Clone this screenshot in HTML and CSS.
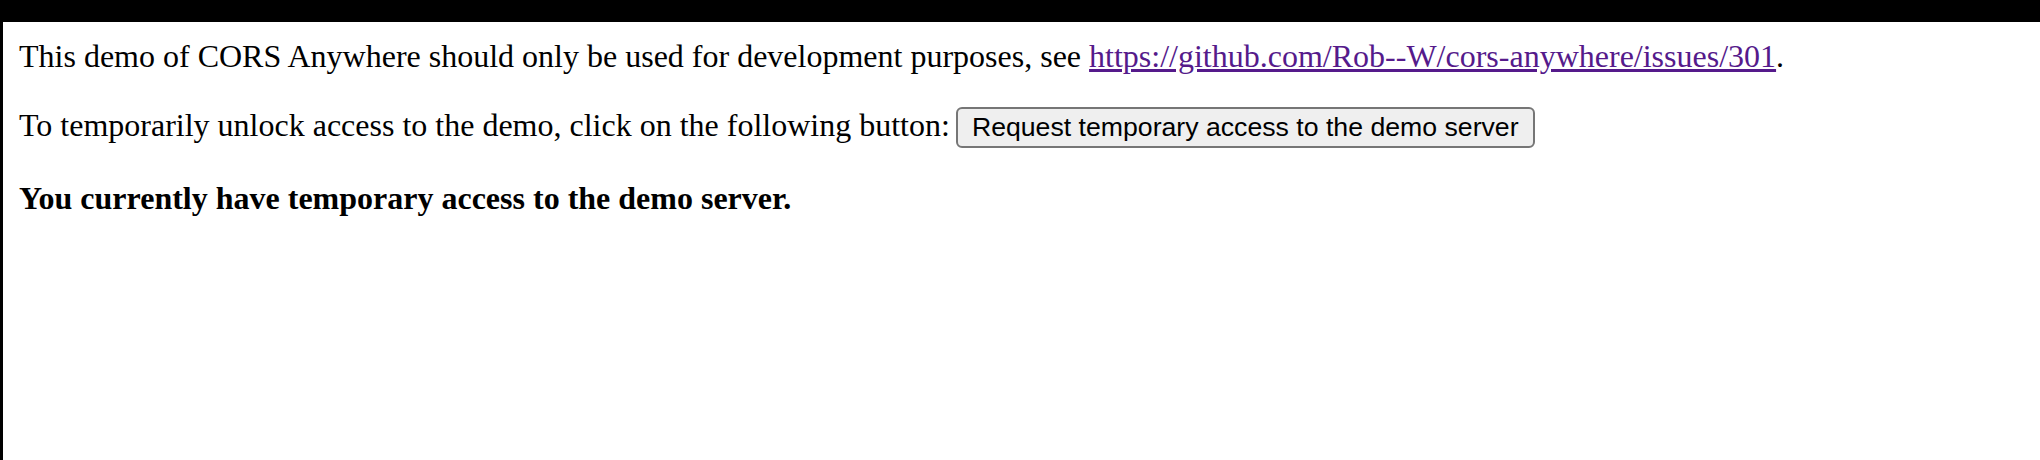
FILE: index.html
```html
<!DOCTYPE html>
<html>
<head>
<meta charset="utf-8">
<title>CORS Anywhere</title>
<link rel="stylesheet" href="styles.css">
</head>
<body>
<div class="topbar"></div>
<main class="content">
<p class="para">This demo of CORS Anywhere should only be used for development purposes, see <a class="link" href="https://github.com/Rob--W/cors-anywhere/issues/301">https://github.com/Rob--W/cors-anywhere/issues/301</a>.</p>
<p class="para">To temporarily unlock access to the demo, click on the following button: <button class="btn" type="button">Request temporary access to the demo server</button></p>
<p class="para status">You currently have temporary access to the demo server.</p>
</main>
</body>
</html>
```

FILE: styles.css
```css
html, body {
  margin: 0;
  padding: 0;
  background: #ffffff;
}

body {
  font-family: "Liberation Serif", "Times New Roman", serif;
  font-size: 32px;
  color: #000000;
  border-left: 3px solid #000000;
  min-height: 460px;
  box-sizing: border-box;
}

.topbar {
  height: 22px;
  background: #000000;
}

.content {
  padding: 16px 16px 0 16px;
}

.para {
  margin: 0 0 32px 0;
}

.link {
  color: #551a8b;
}

.btn {
  font-family: "Liberation Sans", Arial, sans-serif;
  font-size: 26.67px;
  color: #000000;
  background: #efefef;
  border: 2px solid #767676;
  border-radius: 6px;
  padding: 3px 14px;
  margin: 0 0 0 -2px;
}

.status {
  font-weight: bold;
}
```
